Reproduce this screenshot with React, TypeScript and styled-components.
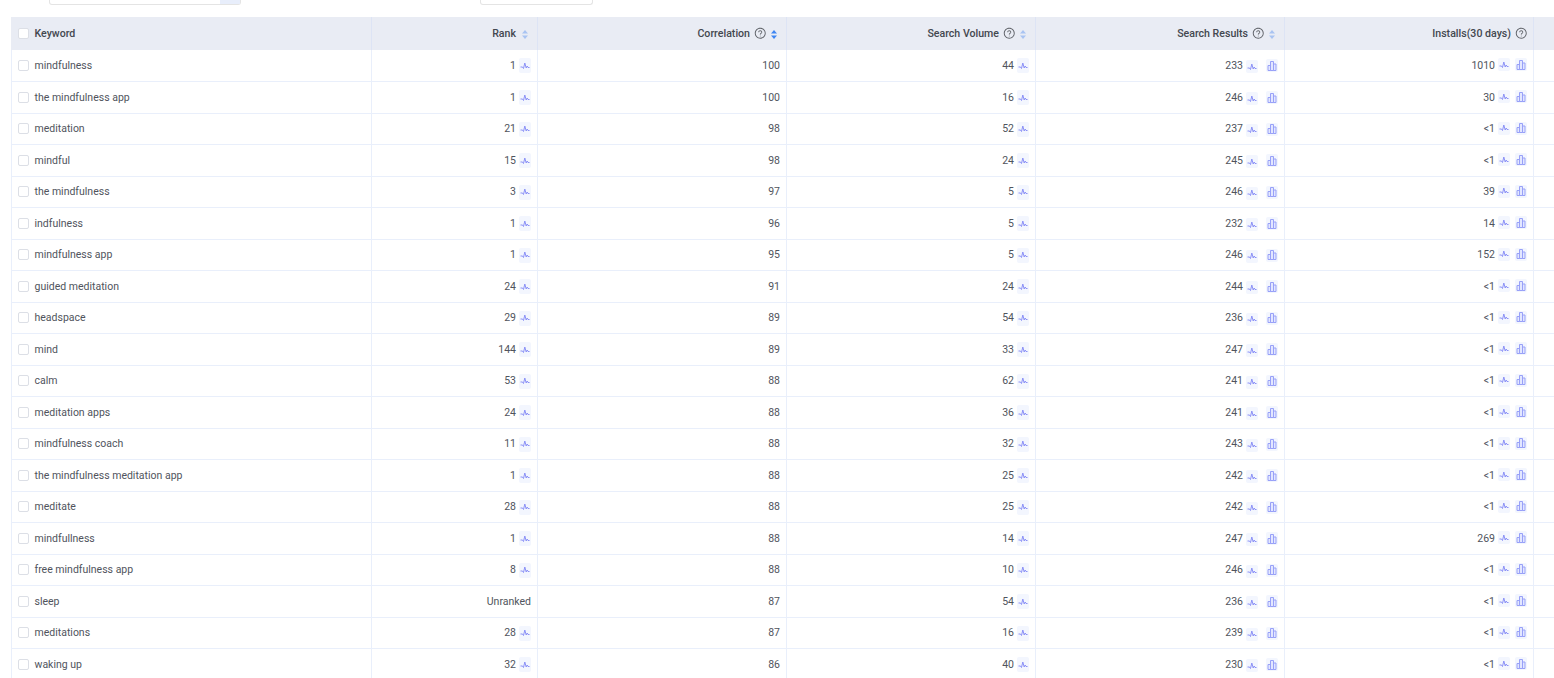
import React from 'react';
import styled, { createGlobalStyle } from 'styled-components';
import { AiOutlineQuestionCircle } from 'react-icons/ai';

const GlobalStyle = createGlobalStyle`
  html, body {
    margin: 0;
    padding: 0;
    background: #fff;
    overflow: hidden;
  }
  body {
    font-family: Roboto, "Liberation Sans", sans-serif;
    font-size: 10.5px;
    color: #50545d;
  }
`

const Page = styled.div`
  width: 1554px;
  height: 678px;
  overflow: hidden;
`

const FilterBar = styled.div`
  display: flex;
  height: 17px;
  padding-left: 49px;
  box-sizing: border-box;
  align-items: flex-start;
`

const FilterBox = styled.div<{ $width: number; $gap: number }>`
  display: flex;
  justify-content: flex-end;
  width: ${p => p.$width}px;
  height: 5px;
  margin-right: ${p => p.$gap}px;
  box-sizing: border-box;
  border: 1px solid #e4e4e4;
  border-top: none;
  border-radius: 0 0 3px 3px;
  background: #fff;
`

const FilterButton = styled.div`
  width: 20px;
  height: 4px;
  background: #e8eefb;
`

const Table = styled.div`
  margin-left: 11px;
  width: 1543px;
`

const Check = styled.div`
  width: 11px;
  height: 11px;
  margin-right: 5.5px;
  box-sizing: border-box;
  flex: none;
  border: 1px solid #dcdfe6;
  border-radius: 2px;
  background: #fff;
`

const Label = styled.span``

const Row = styled.div<{ $head?: boolean }>`
  display: grid;
  grid-template-columns: 360px 166px 249px 249px 249px 249px 20px;
  height: ${p => (p.$head ? '33px' : '32px')};
  box-sizing: border-box;
  background: ${p => (p.$head ? '#e9ecf4' : '#fff')};
  border-bottom: ${p => (p.$head ? 'none' : '1px solid #e9effb')};
  border-left: 1px solid ${p => (p.$head ? '#e9ecf4' : '#e9effb')};
  &:nth-child(2n+4) {
    height: 31px;
  }
  &:nth-child(2n+4) ${Label}, &:nth-child(2n+4) ${Check} {
    margin-bottom: 2px;
  }
`

const Cell = styled.div<{ $head?: boolean; $left?: boolean }>`
  display: flex;
  align-items: center;
  justify-content: ${p => (p.$left ? 'flex-start' : 'flex-end')};
  min-width: 0;
  box-sizing: border-box;
  padding: 0 6px;
  border-right: 1px solid ${p => (p.$head ? '#dde4f5' : '#e9effb')};
  font-size: ${p => (p.$head ? '10.6px' : '10.5px')};
  font-weight: ${p => (p.$head ? 500 : 400)};
  color: ${p => (p.$head ? '#43474f' : '#50545d')};
  white-space: nowrap;
`

const TailCell = styled.div<{ $head?: boolean }>`
  background: ${p => (p.$head ? '#e9ecf4' : '#fff')};
`

const HelpMark = styled(AiOutlineQuestionCircle)`
  flex: none;
  width: 12.5px;
  height: 12.5px;
  margin-left: 3.5px;
  color: #5f6268;
`

const SortMark = styled.svg`
  flex: none;
  width: 6px;
  height: 9px;
  margin: 1px 3px 0 5px;
`

const RankSort = styled(SortMark)`
  margin-left: 6px;
`

const IconButton = styled.div<{ $gap?: number; $short?: boolean; $shift?: number }>`
  display: flex;
  align-items: center;
  justify-content: center;
  flex: none;
  position: relative;
  top: ${p => p.$shift ?? 0}px;
  width: 12px;
  height: ${p => (p.$short ? 13 : 15)}px;
  margin-left: ${p => p.$gap ?? 3}px;
  border-radius: 2px;
  background: #f3f6fe;
`

const Drawing = styled.svg`
  width: 10px;
  height: 10px;
  fill: none;
  stroke: #8b91f7;
  stroke-width: 1;
`

const BarDrawing = styled(Drawing)`
  fill: #e3e7ff;
  stroke: #98a1f8;
`

const sortPaths = (color: string) => (
  <>
    <path d="M3 0 L6 3.4 H0 Z" fill={color} />
    <path d="M3 9 L0 5.6 H6 Z" fill={color} />
  </>
)

const Sort = ({ active }: { active?: boolean }) => (
  <SortMark viewBox="0 0 6 9">{sortPaths(active ? '#3f86f2' : '#a9c4f2')}</SortMark>
)

const Wave = ({ short, shift }: { short?: boolean; shift?: number }) => (
  <IconButton $short={short} $shift={shift}>
    <Drawing viewBox="0 0 10 10">
      <path d="M0.5 6 H2.5 L3.5 7.5 L4.8 2 L6.2 7 L7.2 5 L8 6.5 H9.5" />
    </Drawing>
  </IconButton>
)

const Bars = ({ shift, gap }: { shift?: number; gap: number }) => (
  <IconButton $gap={gap} $short $shift={shift}>
    <BarDrawing viewBox="0 0 10 10">
      <path d="M1 9.5 V4.5 H3.5 V9.5 Z M3.5 9.5 V0.5 H6.5 V9.5 Z M6.5 9.5 V3 H9 V9.5 Z" />
    </BarDrawing>
  </IconButton>
)

const rows: [string, string, number, number, number, string][] = [
  ['mindfulness', '1', 100, 44, 233, '1010'],
  ['the mindfulness app', '1', 100, 16, 246, '30'],
  ['meditation', '21', 98, 52, 237, '<1'],
  ['mindful', '15', 98, 24, 245, '<1'],
  ['the mindfulness', '3', 97, 5, 246, '39'],
  ['indfulness', '1', 96, 5, 232, '14'],
  ['mindfulness app', '1', 95, 5, 246, '152'],
  ['guided meditation', '24', 91, 24, 244, '<1'],
  ['headspace', '29', 89, 54, 236, '<1'],
  ['mind', '144', 89, 33, 247, '<1'],
  ['calm', '53', 88, 62, 241, '<1'],
  ['meditation apps', '24', 88, 36, 241, '<1'],
  ['mindfulness coach', '11', 88, 32, 243, '<1'],
  ['the mindfulness meditation app', '1', 88, 25, 242, '<1'],
  ['meditate', '28', 88, 25, 242, '<1'],
  ['mindfullness', '1', 88, 14, 247, '269'],
  ['free mindfulness app', '8', 88, 10, 246, '<1'],
  ['sleep', 'Unranked', 87, 54, 236, '<1'],
  ['meditations', '28', 87, 16, 239, '<1'],
  ['waking up', '32', 86, 40, 230, '<1'],
];

const App = () => {
  return (
    <Page>
      <GlobalStyle />
      <FilterBar>
        <FilterBox $width={192} $gap={239}><FilterButton /></FilterBox>
        <FilterBox $width={113} $gap={0} />
      </FilterBar>
      <Table>
        <Row $head>
          <Cell $head $left><Check /><Label>Keyword</Label></Cell>
          <Cell $head>
            <Label>Rank</Label>
            <RankSort viewBox="0 0 6 9">{sortPaths('#a9c4f2')}</RankSort>
          </Cell>
          <Cell $head><Label>Correlation</Label><HelpMark /><Sort active /></Cell>
          <Cell $head><Label>Search Volume</Label><HelpMark /><Sort /></Cell>
          <Cell $head><Label>Search Results</Label><HelpMark /><Sort /></Cell>
          <Cell $head><Label>Installs(30 days)</Label><HelpMark /></Cell>
          <TailCell $head />
        </Row>
        {rows.map(r => (
          <Row key={r[0]}>
            <Cell $left><Check /><Label>{r[0]}</Label></Cell>
            <Cell>
              <Label>{r[1]}</Label>
              {r[1] !== 'Unranked' && <Wave />}
            </Cell>
            <Cell><Label>{r[2]}</Label></Cell>
            <Cell><Label>{r[3]}</Label><Wave /></Cell>
            <Cell><Label>{r[4]}</Label><Wave short shift={1} /><Bars gap={8} /></Cell>
            <Cell><Label>{r[5]}</Label><Wave short shift={-1} /><Bars gap={5} shift={-1} /></Cell>
            <TailCell />
          </Row>
        ))}
      </Table>
    </Page>
  );
}

export default App;
